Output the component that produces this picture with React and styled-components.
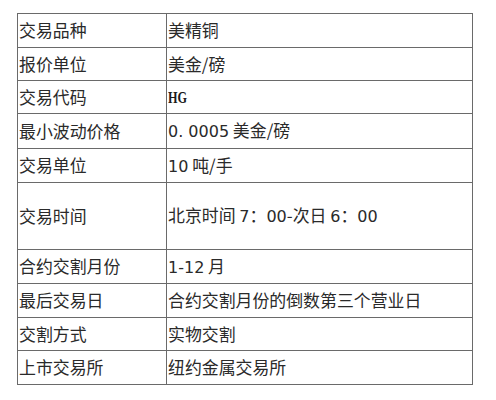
import React from "react";
import styled, { createGlobalStyle } from "styled-components";

const Global = createGlobalStyle`
  html, body { margin: 0; padding: 0; background: #fff; }
  body { font-family: "Noto Sans CJK SC", "Noto Sans", sans-serif; }
`;

const Page = styled.div`
  padding: 13px 0 0 17px;
`;

const Table = styled.table`
  border-collapse: collapse;
  width: 456px;
  table-layout: fixed;
  color: #2a2a2a;
  font-size: 16.9px;
`;

const Row = styled.tr`
  height: ${(p) => p.$h}px;
`;

const Cell = styled.td`
  border: 1px solid #6a6a6a;
  padding: 0 0 0 1px;
  vertical-align: middle;
  line-height: 1;
  white-space: nowrap;
  width: ${(p) => (p.$label ? "147px" : "auto")};
`;

const Latin = styled.span`
  font-family: ${(p) => (p.$serif ? '"Liberation Serif", serif' : '"DejaVu Sans", sans-serif')};
  font-size: ${(p) => (p.$serif ? "17px" : "16px")};
  font-weight: ${(p) => (p.$serif ? 600 : 400)};
  transform: ${(p) => (p.$serif ? "scaleX(0.72)" : "none")};
  color: ${(p) => (p.$serif ? "#1a1a1a" : "inherit")};
  display: inline-block;
  transform-origin: left center;
`;

const rows = [
  ["交易品种", "美精铜", 34],
  ["报价单位", "美金/磅", 33],
  ["交易代码", <Latin $serif>HG</Latin>, 33],
  ["最小波动价格", <><Latin>0. 0005</Latin> 美金/磅</>, 35],
  ["交易单位", <><Latin>10</Latin> 吨/手</>, 34],
  ["交易时间", <>北京时间 <Latin>7</Latin>：<Latin>00</Latin>-次日 <Latin>6</Latin>：<Latin>00</Latin></>, 67],
  ["合约交割月份", <><Latin>1-12</Latin> 月</>, 34],
  ["最后交易日", "合约交割月份的倒数第三个营业日", 34],
  ["交割方式", "实物交割", 33],
  ["上市交易所", "纽约金属交易所", 34],
];

export default function App() {
  return (
    <Page>
      <Global />
      <Table>
        <tbody>
          {rows.map(([label, value, h], i) => (
            <Row key={i} $h={h}>
              <Cell $label>{label}</Cell>
              <Cell>{value}</Cell>
            </Row>
          ))}
        </tbody>
      </Table>
    </Page>
  );
}
